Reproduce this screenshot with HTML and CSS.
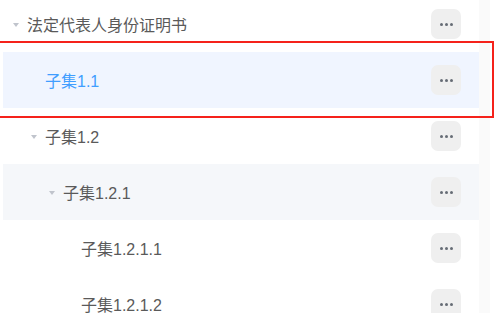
FILE: index.html
```html
<!DOCTYPE html>
<html lang="zh">
<head>
<meta charset="utf-8">
<title>Tree</title>
<link rel="stylesheet" href="styles.css">
</head>
<body>
<div class="panel">
  <div class="tree">
    <div class="row lvl0">
      <span class="caret"></span><span class="label">法定代表人身份证明书</span>
      <span class="more"><i></i><i></i><i></i></span>
    </div>
    <div class="row lvl1 leaf active">
      <span class="label">子集1.1</span>
      <span class="more"><i></i><i></i><i></i></span>
    </div>
    <div class="row lvl1">
      <span class="caret"></span><span class="label">子集1.2</span>
      <span class="more"><i></i><i></i><i></i></span>
    </div>
    <div class="row lvl2 hover">
      <span class="caret"></span><span class="label">子集1.2.1</span>
      <span class="more"><i></i><i></i><i></i></span>
    </div>
    <div class="row lvl3 leaf">
      <span class="label">子集1.2.1.1</span>
      <span class="more"><i></i><i></i><i></i></span>
    </div>
    <div class="row lvl3 leaf">
      <span class="label">子集1.2.1.2</span>
      <span class="more"><i></i><i></i><i></i></span>
    </div>
  </div>
  <div class="track"></div>
</div>
<div class="mark"></div>
</body>
</html>
```
FILE: styles.css
```css
html, body {
  margin: 0;
  padding: 0;
  background: #ffffff;
}
body {
  width: 501px;
  height: 313px;
  overflow: hidden;
  position: relative;
  font-family: "Liberation Sans", "Noto Sans CJK SC", sans-serif;
}
.panel {
  display: flex;
  height: 313px;
  overflow: hidden;
}
.tree {
  width: 476px;
  margin-left: 3px;
  margin-top: -4px;
  flex: none;
}
.track {
  width: 11px;
  background: #fafafa;
  flex: none;
}
.row {
  height: 56px;
  display: flex;
  align-items: center;
  padding-right: 18px;
  box-sizing: border-box;
  font-size: 16px;
  color: #5a5a5a;
}
.row.lvl0 { padding-left: 10px; }
.row.lvl1 { padding-left: 28px; }
.row.lvl2 { padding-left: 46px; }
.row.lvl3 { padding-left: 64px; }
.row.leaf .label { margin-left: 14px; }
.row.active { background: #f0f5ff; color: #409eff; }
.row.hover { background: #f5f7fa; }
.caret {
  width: 0;
  height: 0;
  border-left: 3px solid transparent;
  border-right: 3px solid transparent;
  border-top: 4px solid #c0c4cc;
  margin-right: 8px;
  margin-top: 1px;
}
.label {
  flex: 1;
  white-space: nowrap;
}
.more {
  width: 30px;
  height: 30px;
  border-radius: 7px;
  background: #efefef;
  display: flex;
  align-items: center;
  justify-content: center;
  gap: 2px;
}
.more i {
  width: 3px;
  height: 3px;
  border-radius: 50%;
  background: #666c75;
}
.mark {
  position: absolute;
  left: -2px;
  top: 41px;
  width: 492px;
  height: 73px;
  border: 2px solid #f5221b;
}
```
